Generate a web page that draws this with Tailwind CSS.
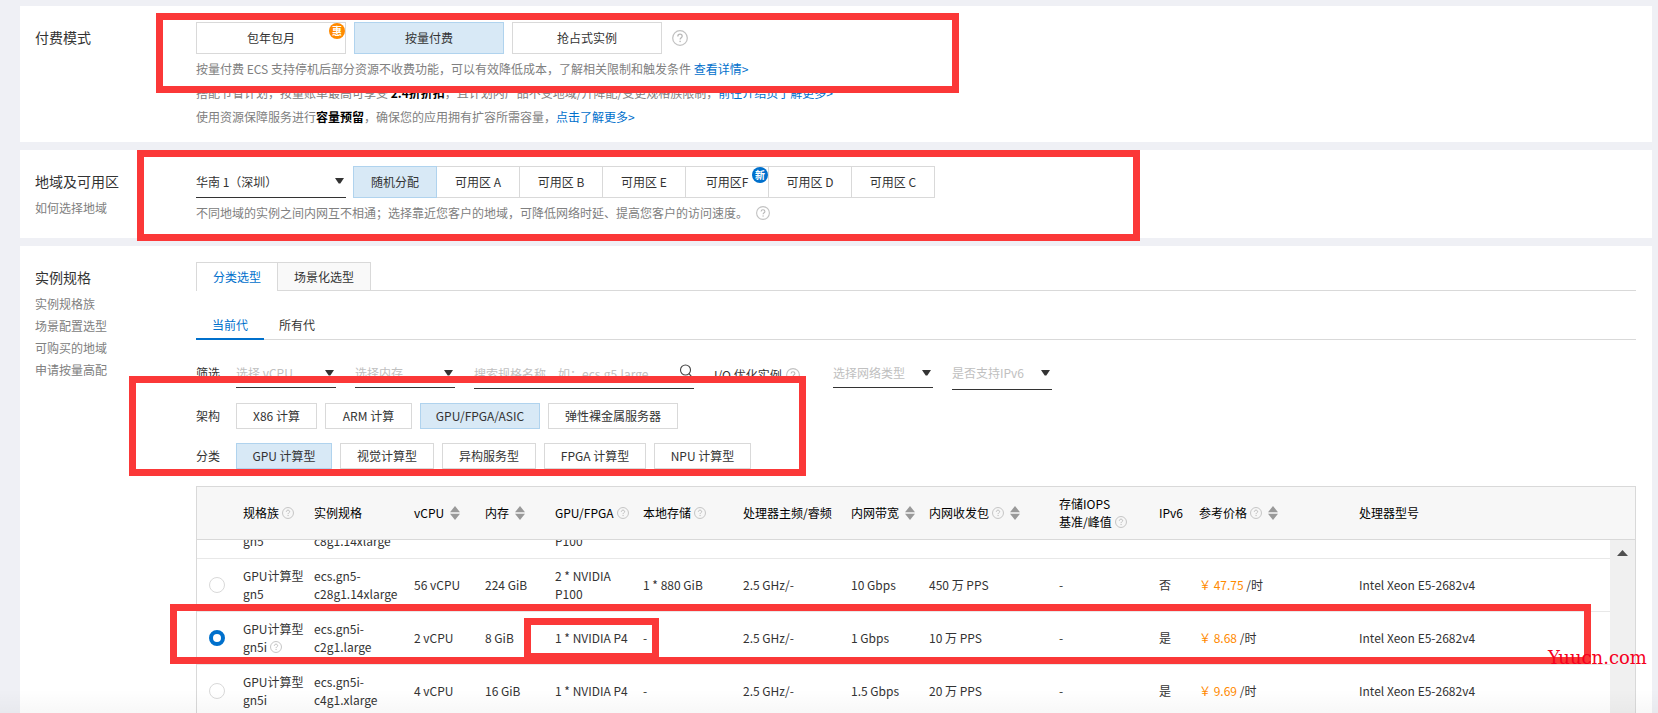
<!DOCTYPE html>
<html lang="zh-CN">
<head>
<meta charset="utf-8">
<title>ECS 购买</title>
<script src="https://cdn.jsdelivr.net/npm/@tailwindcss/browser@4"></script>
</head>
<body class="relative h-screen overflow-hidden bg-[#eff0f5] pt-1.5 pl-5 pr-1.5 font-['Noto_Sans_CJK_SC',sans-serif] text-xs text-[#333]">
<svg class="hidden">
  <symbol id="help" viewBox="0 0 14 14"><circle cx="7" cy="7" r="6.4" fill="none" stroke="#c2c2c2" stroke-width="1.1"/><path d="M5.1 5.6C5.1 4.4 5.9 3.7 7 3.7s1.9.7 1.9 1.7c0 1.3-1.8 1.4-1.8 2.9" fill="none" stroke="#b8b8b8" stroke-width="1.1"/><rect x="6.5" y="9.4" width="1.2" height="1.2" fill="#b8b8b8"/></symbol>
  <symbol id="caret" viewBox="0 0 9 6"><path d="M0 0h9L5.3 5.6H3.7z" fill="#333"/></symbol>
  <symbol id="sort" viewBox="0 0 10 14"><path d="M5 0l5 6.2H0zM5 14l5-6.2H0z" fill="#999"/></symbol>
</svg>

<main class="flex flex-col gap-2">
  <section class="flex bg-white pt-4 pb-3">
    <div class="w-44 shrink-0 pl-[15px]"><h2 class="mb-px text-sm leading-[30px]">付费模式</h2></div>
    <div class="min-w-0 flex-1 pr-4">
      <div class="flex items-center gap-2">
        <button class="relative h-8 w-[150px] border border-[#d9d9d9] bg-white">包年包月<span class="absolute top-0 right-0 size-4 rounded-full bg-[#ff8a00] text-center text-[10px] leading-4 font-bold text-white">惠</span></button>
        <button class="h-8 w-[150px] border border-[#b0d3ee] bg-[#d8e9f6]">按量付费</button>
        <button class="h-8 w-[150px] border border-[#d9d9d9] bg-white">抢占式实例</button>
        <svg class="ml-0.5 size-4"><use href="#help"/></svg>
      </div>
      <div class="mt-[3px] mb-px leading-6 whitespace-nowrap text-[#808080]">
        <p>按量付费 ECS 支持停机后部分资源不收费功能，可以有效降低成本，了解相关限制和触发条件 <a href="#" class="text-[#0070cc]">查看详情&gt;</a></p>
        <p>搭配节省计划，按量账单最高可享受 <b class="text-black">2.4折折扣</b>，且计划内产品不受地域/升降配/变更规格族限制，<a href="#" class="text-[#0070cc]">前往介绍页了解更多&gt;</a></p>
        <p>使用资源保障服务进行<b class="text-black">容量预留</b>，确保您的应用拥有扩容所需容量，<a href="#" class="text-[#0070cc]">点击了解更多&gt;</a></p>
      </div>
    </div>
  </section>

  <section class="flex bg-white pt-4 pb-3">
    <div class="w-44 shrink-0 pl-[15px]">
      <h2 class="mb-px text-sm leading-[30px]">地域及可用区</h2>
      <a href="#" class="block leading-[22px] text-[#808080]">如何选择地域</a>
    </div>
    <div class="min-w-0 flex-1 pr-4">
      <div class="flex">
        <label class="relative mr-[7px] w-[150px]">
          <select aria-label="地域" class="h-8 w-full appearance-none border-b border-[#333] bg-transparent"><option>华南 1（深圳）</option></select>
          <svg class="pointer-events-none absolute top-3 right-0.5 h-1.5 w-[9px]"><use href="#caret"/></svg>
        </label>
        <button class="z-10 h-8 w-[84px] border border-[#b0d3ee] bg-[#d8e9f6]">随机分配</button>
        <button class="-ml-px h-8 w-[84px] border border-[#d9d9d9]">可用区 A</button>
        <button class="-ml-px h-8 w-[84px] border border-[#d9d9d9]">可用区 B</button>
        <button class="-ml-px h-8 w-[84px] border border-[#d9d9d9]">可用区 E</button>
        <button class="relative -ml-px h-8 w-[84px] border border-[#d9d9d9]">可用区F<span class="absolute top-0 right-0 size-4 rounded-full bg-[#0070cc] text-center text-[10px] leading-4 font-bold text-white">新</span></button>
        <button class="-ml-px h-8 w-[84px] border border-[#d9d9d9]">可用区 D</button>
        <button class="-ml-px h-8 w-[84px] border border-[#d9d9d9]">可用区 C</button>
      </div>
      <p class="mt-[3px] mb-px flex items-center gap-2 leading-6 whitespace-nowrap text-[#808080]">不同地域的实例之间内网互不相通；选择靠近您客户的地域，可降低网络时延、提高您客户的访问速度。<svg class="size-3.5"><use href="#help"/></svg></p>
    </div>
  </section>

  <section class="flex bg-white pt-4">
    <div class="w-44 shrink-0 pl-[15px]">
      <h2 class="mb-px text-sm leading-[30px]">实例规格</h2>
      <nav class="flex flex-col leading-[22px] text-[#808080]">
        <a href="#">实例规格族</a><a href="#">场景配置选型</a><a href="#">可购买的地域</a><a href="#">申请按量高配</a>
      </nav>
    </div>
    <div class="min-w-0 flex-1 pr-4">
      <div class="flex h-[29px]">
        <button class="w-[81px] border-t border-l border-[#d9d9d9] text-[#0070cc]">分类选型</button>
        <button class="w-[94px] border border-[#d9d9d9] bg-[#f9f9f9]">场景化选型</button>
        <div class="flex-1 border-b border-[#d9d9d9]"></div>
      </div>
      <div class="mt-5 flex h-[29px]">
        <button class="w-[68px] border-b-2 border-[#0070cc] text-[#0070cc]">当前代</button>
        <div class="flex-1 border-b border-[#d9d9d9]"><button class="h-full px-[15px]">所有代</button></div>
      </div>
      <div class="mt-[18px] flex items-start leading-[30px]">
        <span class="w-10">筛选</span>
        <label class="relative mr-[19px] w-[100px]">
          <select aria-label="选择 vCPU" class="h-[30px] w-full appearance-none border-b border-[#333] text-[#c0c0c0]"><option>选择 vCPU</option></select>
          <svg class="pointer-events-none absolute top-3 right-0.5 h-1.5 w-[9px]"><use href="#caret"/></svg>
        </label>
        <label class="relative mr-[19px] w-[100px]">
          <select aria-label="选择内存" class="h-[30px] w-full appearance-none border-b border-[#333] text-[#c0c0c0]"><option>选择内存</option></select>
          <svg class="pointer-events-none absolute top-3 right-0.5 h-1.5 w-[9px]"><use href="#caret"/></svg>
        </label>
        <label class="relative mr-5 w-[220px]">
          <input type="text" aria-label="搜索规格名称" placeholder="搜索规格名称，如：ecs.g5.large" class="h-[31px] w-full border-b border-[#333] placeholder:text-[#c0c0c0]">
          <svg class="absolute top-1.5 right-px size-3.5" viewBox="0 0 14 14" fill="none" stroke="#444" stroke-width="1.1"><circle cx="6.5" cy="6" r="5"/><path d="M10 9.6l3 3.6"/></svg>
        </label>
        <span class="flex w-[119px] items-center gap-1 pt-0.5">I/O 优化实例<svg class="size-3.5"><use href="#help"/></svg></span>
        <label class="relative mr-[19px] w-[100px]">
          <select aria-label="选择网络类型" class="h-[30px] w-full appearance-none border-b border-[#333] text-[#c0c0c0]"><option>选择网络类型</option></select>
          <svg class="pointer-events-none absolute top-3 right-0.5 h-1.5 w-[9px]"><use href="#caret"/></svg>
        </label>
        <label class="relative w-[100px]">
          <select aria-label="是否支持IPv6" class="h-8 w-full appearance-none border-b border-[#333] pb-0.5 text-[#c0c0c0]"><option>是否支持IPv6</option></select>
          <svg class="pointer-events-none absolute top-3 right-0.5 h-1.5 w-[9px]"><use href="#caret"/></svg>
        </label>
      </div>
      <div class="mt-[13px] flex gap-2 leading-[26px]">
        <span class="w-8">架构</span>
        <button class="h-[26px] w-[81px] border border-[#d9d9d9] leading-6">X86 计算</button>
        <button class="h-[26px] w-[87px] border border-[#d9d9d9] leading-6">ARM 计算</button>
        <button class="h-[26px] w-[120px] border border-[#b0d3ee] bg-[#d8e9f6] leading-6">GPU/FPGA/ASIC</button>
        <button class="h-[26px] w-[130px] border border-[#d9d9d9] leading-6">弹性裸金属服务器</button>
      </div>
      <div class="mt-3.5 flex gap-2 leading-[26px]">
        <span class="w-8">分类</span>
        <button class="h-[26px] w-[96px] border border-[#b0d3ee] bg-[#d8e9f6] leading-6">GPU 计算型</button>
        <button class="h-[26px] w-[94px] border border-[#d9d9d9] leading-6">视觉计算型</button>
        <button class="h-[26px] w-[94px] border border-[#d9d9d9] leading-6">异构服务型</button>
        <button class="h-[26px] w-[102px] border border-[#d9d9d9] leading-6">FPGA 计算型</button>
        <button class="h-[26px] w-[97px] border border-[#d9d9d9] leading-6">NPU 计算型</button>
      </div>

      <div class="mt-[17px] border border-[#d9d9d9]">
        <table class="w-full table-fixed border-b border-[#d9d9d9] bg-[#f7f7f7] text-left leading-[18px] whitespace-nowrap text-black">
          <colgroup><col class="w-[46px]"><col class="w-[71px]"><col class="w-[100px]"><col class="w-[71px]"><col class="w-[70px]"><col class="w-[88px]"><col class="w-[100px]"><col class="w-[108px]"><col class="w-[78px]"><col class="w-[130px]"><col class="w-[100px]"><col class="w-[40px]"><col class="w-[160px]"><col></colgroup>
          <thead><tr class="h-[52px] *:font-normal">
            <th aria-label="选择"></th>
            <th><span class="flex items-center gap-[3px]">规格族<svg class="size-3"><use href="#help"/></svg></span></th>
            <th>实例规格</th>
            <th><span class="flex items-center gap-1.5">vCPU<svg class="h-3.5 w-2.5"><use href="#sort"/></svg></span></th>
            <th><span class="flex items-center gap-1.5">内存<svg class="h-3.5 w-2.5"><use href="#sort"/></svg></span></th>
            <th><span class="flex items-center gap-[3px]">GPU/FPGA<svg class="size-3"><use href="#help"/></svg></span></th>
            <th><span class="flex items-center gap-[3px]">本地存储<svg class="size-3"><use href="#help"/></svg></span></th>
            <th>处理器主频/睿频</th>
            <th><span class="flex items-center gap-1.5">内网带宽<svg class="h-3.5 w-2.5"><use href="#sort"/></svg></span></th>
            <th><span class="flex items-center gap-[3px]">内网收发包<svg class="mr-[3px] size-3"><use href="#help"/></svg><svg class="h-3.5 w-2.5"><use href="#sort"/></svg></span></th>
            <th>存储IOPS<span class="flex items-center gap-[3px]">基准/峰值<svg class="size-3"><use href="#help"/></svg></span></th>
            <th>IPv6</th>
            <th><span class="flex items-center gap-[3px]">参考价格<svg class="mr-[3px] size-3"><use href="#help"/></svg><svg class="h-3.5 w-2.5"><use href="#sort"/></svg></span></th>
            <th>处理器型号</th>
          </tr></thead>
        </table>
        <div class="flex overflow-hidden">
          <table class="-mt-[34px] min-w-0 flex-1 table-fixed leading-[18px] whitespace-nowrap">
            <colgroup><col class="w-[46px]"><col class="w-[71px]"><col class="w-[100px]"><col class="w-[71px]"><col class="w-[70px]"><col class="w-[88px]"><col class="w-[100px]"><col class="w-[108px]"><col class="w-[78px]"><col class="w-[130px]"><col class="w-[100px]"><col class="w-[40px]"><col class="w-[160px]"><col></colgroup>
            <tbody>
              <tr class="h-[53px] border-b border-[#e8e8e8]">
                <td></td><td><br>gn5</td><td><br>c8g1.14xlarge</td><td></td><td></td><td><br>P100</td><td></td><td></td><td></td><td></td><td></td><td></td><td></td><td></td>
              </tr>
              <tr class="h-[53px] border-b border-[#e8e8e8]">
                <td class="pl-3"><input type="radio" name="spec" aria-label="ecs.gn5-c28g1.14xlarge" class="block size-4 appearance-none rounded-full border border-[#d9d9d9] checked:border-4 checked:border-[#0070cc]"></td>
                <td>GPU计算型<br>gn5</td><td>ecs.gn5-<br>c28g1.14xlarge</td><td>56 vCPU</td><td>224 GiB</td><td>2 * NVIDIA<br>P100</td><td>1 * 880 GiB</td><td>2.5 GHz/-</td><td>10 Gbps</td><td>450 万 PPS</td><td>-</td><td>否</td><td><span class="text-[#ff8a00]">￥ 47.75</span> /时</td><td>Intel Xeon E5-2682v4</td>
              </tr>
              <tr class="h-[53px] border-b border-[#e8e8e8]">
                <td class="pl-3"><input type="radio" name="spec" checked aria-label="ecs.gn5i-c2g1.large" class="block size-4 appearance-none rounded-full border border-[#d9d9d9] checked:border-4 checked:border-[#0070cc]"></td>
                <td>GPU计算型<span class="flex items-center gap-[3px]">gn5i<svg class="size-3"><use href="#help"/></svg></span></td><td>ecs.gn5i-<br>c2g1.large</td><td>2 vCPU</td><td>8 GiB</td><td>1 * NVIDIA P4</td><td>-</td><td>2.5 GHz/-</td><td>1 Gbps</td><td>10 万 PPS</td><td>-</td><td>是</td><td><span class="text-[#ff8a00]">￥ 8.68</span> /时</td><td>Intel Xeon E5-2682v4</td>
              </tr>
              <tr class="h-[53px] border-b border-[#e8e8e8]">
                <td class="pl-3"><input type="radio" name="spec" aria-label="ecs.gn5i-c4g1.xlarge" class="block size-4 appearance-none rounded-full border border-[#d9d9d9] checked:border-4 checked:border-[#0070cc]"></td>
                <td>GPU计算型<br>gn5i</td><td>ecs.gn5i-<br>c4g1.xlarge</td><td>4 vCPU</td><td>16 GiB</td><td>1 * NVIDIA P4</td><td>-</td><td>2.5 GHz/-</td><td>1.5 Gbps</td><td>20 万 PPS</td><td>-</td><td>是</td><td><span class="text-[#ff8a00]">￥ 9.69</span> /时</td><td>Intel Xeon E5-2682v4</td>
              </tr>
            </tbody>
          </table>
          <div class="flex w-[25px] shrink-0 justify-center bg-[#f0f0f0] pt-2.5"><svg class="h-1.5 w-[11px]" viewBox="0 0 11 6"><path d="M5.5 0L11 6H0z" fill="#505050"/></svg></div>
        </div>
      </div>
    </div>
  </section>
</main>

<div class="pointer-events-none absolute inset-x-0 bottom-0 h-6 bg-linear-to-b from-transparent to-black/3"></div>

<!-- Highlight frames drawn over the page -->
<div class="pointer-events-none absolute inset-0 z-20">
  <div class="absolute top-[13px] left-[156px] h-20 w-[803px] border-7 border-[#fb3838]"></div>
  <div class="absolute top-[150px] left-[137px] h-[91px] w-[1003px] border-7 border-[#fb3838]"></div>
  <div class="absolute top-[376px] left-[129px] h-[100px] w-[677px] border-7 border-[#fb3838]"></div>
  <div class="absolute top-[604px] left-[170px] h-[60px] w-[1421px] border-7 border-[#fb3838]"></div>
  <div class="absolute top-[618px] left-[524px] h-[42px] w-[135px] border-7 border-[#fb3838]"></div>
  <div class="absolute top-[646px] left-[1548px] font-['DejaVu_Serif',serif] text-lg leading-6 text-[#f5001d]">Yuucn.com</div>
</div>
</body>
</html>
